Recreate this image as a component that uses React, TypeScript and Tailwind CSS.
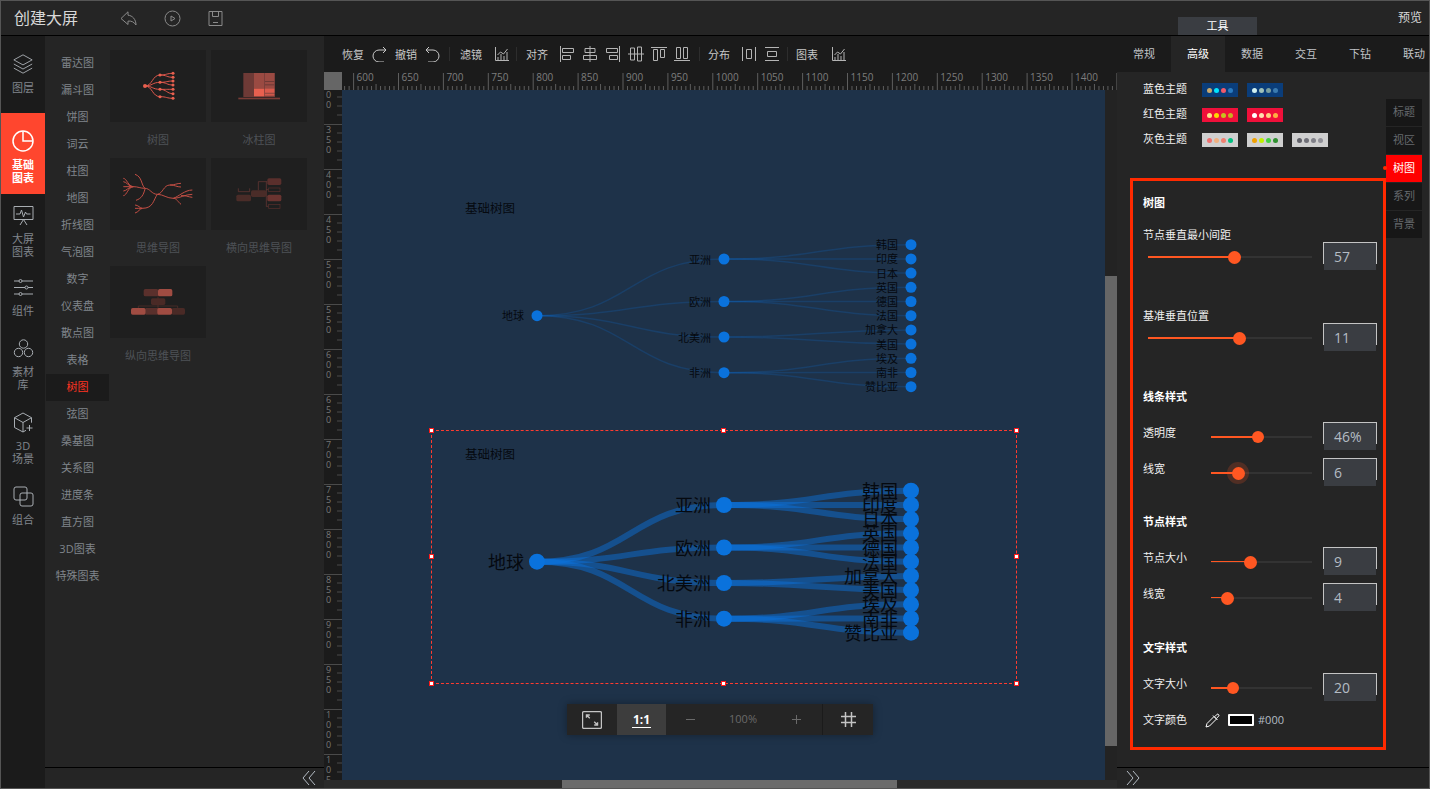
import React from 'react';

const categories = ['雷达图', '漏斗图', '饼图', '词云', '柱图', '地图', '折线图', '气泡图', '数字', '仪表盘', '散点图', '表格', '树图', '弦图', '桑基图', '关系图', '进度条', '直方图', '3D图表', '特殊图表'];
const tabs = ['常规', '高级', '数据', '交互', '下钻', '联动'];
const anchors = ['标题', '视区', '树图', '系列', '背景'];

const themes = [
  { label: '蓝色主题', bg: 'bg-[#0a3d7a]', sets: [['#c8a96e', '#00e5ff', '#f05a6a', '#2a7bc0'], ['#d0f0f0', '#9fc0b8', '#7a9f9f', '#3a7bb0']] },
  { label: '红色主题', bg: 'bg-[#f0103a]', sets: [['#ffe08a', '#ffd800', '#c8c020', '#c8b020'], ['#ffffff', '#ffe0b0', '#ffd080', '#ffb040']] },
  { label: '灰色主题', bg: 'bg-[#cfcfcf]', sets: [['#f07070', '#f0b080', '#f08070', '#00c080'], ['#f0a000', '#c0f000', '#40d040', '#309030'], ['#606068', '#707078', '#808088', '#909098']] },
];

const stroke = { fill: 'none', stroke: 'currentColor', strokeWidth: 1 };

function Icon({ size = 16, box = 16, className = '', children }: { size?: number; box?: number; className?: string; children: React.ReactNode }) {
  return (
    <svg width={size} height={size} viewBox={`0 0 ${box} ${box}`} className={`shrink-0 ${className}`} {...stroke}>
      {children}
    </svg>
  );
}

// toolbar icons
const ChartGlyph = () => (
  <Icon className="text-[#b4b4b4]">
    <path d="M1.5 1v13.5H15M4 14v-3M7 14V8M10 14v-4M13 14V6M3.5 9l3-3 3 2 4-5" />
  </Icon>
);
const AlignGlyph = ({ kind }: { kind: string }) => {
  const shapes: Record<string, React.ReactNode> = {
    left: <path d="M1.5 0v16M3.5 2.5h11v4h-11zM3.5 9.5h8v4h-8z" />,
    centerH: <path d="M8 0v16M3 2.5h10v4H3zM1.5 9.5h13v4h-13z" />,
    right: <path d="M14.5 0v16M1.5 2.5h11v4h-11zM4.5 9.5h8v4h-8z" />,
    centerV: <path d="M0 8h16M2.5 2h4v12h-4zM9.5 1h4v14h-4z" />,
    top: <path d="M0 1.5h16M2.5 3.5h4v11h-4zM9.5 3.5h4v8h-4z" />,
    bottom: <path d="M0 14.5h16M2.5 1.5h4v11h-4zM9.5 1.5h4v11h-4z" />,
    distH: <path d="M1.5 1v14M14.5 1v14M5.5 3.5h5v9h-5z" />,
    distV: <path d="M1 1.5h14M1 14.5h14M3.5 5.5h9v5h-9z" />,
  };
  return <Icon className="text-[#b4b4b4]">{shapes[kind]}</Icon>;
};

function ToolText({ children }: { children: React.ReactNode }) {
  return <span className="text-[11px] text-[#c8c8c8] leading-none whitespace-nowrap">{children}</span>;
}
const Sep = () => <span className="w-px h-[14px] bg-[#2d2d2d] shrink-0" />;

function RailItem({ label, height, pt, active, children }: { label: string[]; height: number; pt: number; active?: boolean; children: React.ReactNode }) {
  return (
    <div
      className={`flex flex-col items-center ${active ? 'bg-[#ff462e] text-white font-bold' : 'text-[#80858c]'}`}
      style={{ height, paddingTop: pt }}
    >
      <span className={active ? 'text-white' : 'text-[#a8adb2]'}>{children}</span>
      <div className="mt-[6px] text-[11px] leading-[13px] text-center">
        {label.map(l => <div key={l}>{l}</div>)}
      </div>
    </div>
  );
}

function Thumb({ caption, box, children }: { caption: string; box: string; children: React.ReactNode }) {
  return (
    <div>
      <svg viewBox={box} className="block w-[96px] h-[72px] bg-[#1f1f1f]">{children}</svg>
      <div className="h-[36px] flex items-center justify-center text-[11px] text-[#4e5257]">{caption}</div>
    </div>
  );
}

// small tree picture on the first thumbnail
function TreeThumb() {
  const mids = [90, 112, 133, 155];
  const leaves = [85, 97, 108, 120, 133, 146, 160];
  const links: string[] = [];
  mids.forEach(y => links.push(`M120 123C142 123 142 ${y} 165 ${y}`));
  leaves.forEach((y, i) => {
    const m = mids[Math.min(3, Math.floor(i / 1.8))];
    links.push(`M165 ${m}C185 ${m} 185 ${y} 204 ${y}`);
  });
  return (
    <>
      {links.map(d => <path key={d} d={d} fill="none" stroke="#e0584d" strokeWidth="3" />)}
      <circle cx="120" cy="123" r="6" fill="#e8604f" />
      {mids.map(y => <circle key={y} cx="165" cy={y} r="4.5" fill="#e8604f" />)}
      {leaves.map(y => <circle key={y} cx="204" cy={y} r="4.5" fill="#e8604f" />)}
    </>
  );
}

function IcicleThumb() {
  return (
    <>
      <rect x="415" y="84" width="95" height="72" fill="#6e3a36" />
      <rect x="447" y="84" width="31" height="47" fill="#9a4a42" />
      <rect x="447" y="131" width="31" height="23" fill="#e8604f" />
      <rect x="480" y="84" width="28" height="70" fill="#9a4a42" />
      <rect x="480" y="108" width="28" height="3" fill="#6e3a36" />
      <rect x="480" y="118" width="28" height="3" fill="#6e3a36" />
      <rect x="480" y="131" width="28" height="12" fill="#d85a4c" />
      <rect x="480" y="148" width="28" height="3" fill="#e8604f" />
      <rect x="400" y="158" width="125" height="5" fill="#7a3c36" />
    </>
  );
}

function MindThumb() {
  const d = [
    'M157 88C140 88 135 70 120 70C105 70 100 65 85 65',
    'M120 70C108 60 112 35 90 28',
    'M120 72C115 90 110 100 93 106',
    'M157 88C145 105 145 130 112 130C100 130 100 130 90 130',
    'M157 88C175 85 175 60 195 60C210 60 215 55 228 55M195 60C210 60 215 66 228 66',
    'M157 88C175 88 185 100 205 100C225 100 240 88 262 88M205 100C215 100 220 112 228 118M205 100C220 95 240 75 262 75M228 92C240 90 250 96 262 97',
    'M85 65C70 65 65 40 55 40M85 65C70 65 65 50 55 50M85 65H55M85 65C70 65 65 78 55 78M85 65C70 65 65 92 55 92',
    'M112 130C105 130 100 120 90 120M112 130C105 130 100 142 90 144',
  ];
  return <>{d.map(p => <path key={p} d={p} fill="none" stroke="#c24e44" strokeWidth="3" />)}</>;
}

function HorizontalThumb() {
  return (
    <>
      <path d="M400 70v10h34V70M484 50v75M460 76V50h27M484 74h6M484 124h6M438 98H420" fill="none" stroke="#6e3a36" strokeWidth="2" />
      <rect x="487" y="40" width="42" height="20" rx="5" fill="#5a2f2c" />
      <rect x="491" y="69" width="34" height="11" fill="none" stroke="#5a2f2c" strokeWidth="2" />
      <rect x="487" y="89" width="42" height="20" rx="5" fill="#6a3430" />
      <rect x="491" y="118" width="34" height="12" fill="none" stroke="#5a2f2c" strokeWidth="2" />
      <rect x="438" y="76" width="46" height="20" rx="5" fill="#4a2c28" />
      <rect x="394" y="89" width="44" height="20" rx="5" fill="#4a2c28" />
    </>
  );
}

function VerticalThumb() {
  return (
    <>
      <path d="M100 429v-6h118v6M159 394v35" fill="none" stroke="#5a302c" strokeWidth="2" />
      <rect x="116" y="372" width="44" height="22" rx="5" fill="#5a302c" />
      <rect x="159" y="372" width="43" height="22" rx="5" fill="#a04c42" />
      <rect x="138" y="400" width="43" height="20" rx="5" fill="#4a2a26" />
      <rect x="122" y="429" width="40" height="20" fill="#5a302c" />
      <rect x="78" y="429" width="44" height="20" rx="5" fill="#a04c42" />
      <rect x="200" y="429" width="40" height="20" rx="5" fill="#4a2a26" />
      <rect x="157" y="429" width="44" height="20" rx="5" fill="#a04c42" />
    </>
  );
}

function TopRuler() {
  const ticks = [];
  for (let i = -3; i < 180; i++) {
    const x = 11.6 + i * 4.49;
    const h = i % 10 === 0 ? 17 : i % 5 === 0 ? 6 : 4;
    ticks.push(<line key={i} x1={x} x2={x} y1={18} y2={18 - h} stroke="#5e5e5e" />);
    if (i % 10 === 0 && i >= 0) {
      ticks.push(<text key={`t${i}`} x={x + 3} y={9} fontSize="10" fill="#7d7d7d">{600 + i * 5}</text>);
    }
  }
  return <svg width="775" height="18" className="block bg-[#1b1b1b]">{ticks}</svg>;
}

function LeftRuler() {
  const items = [];
  for (let i = 0; i < 16; i++) {
    const y = -11 + i * 45;
    items.push(<line key={i} x1={0} x2={18} y1={y + 0.5} y2={y + 0.5} stroke="#4a4a4a" />);
    for (let k = 1; k < 5; k++) {
      items.push(<line key={`m${i}-${k}`} x1={13} x2={18} y1={y + k * 9} y2={y + k * 9} stroke="#4a4a4a" />);
    }
    String(300 + i * 50).split('').forEach((c, n) => {
      items.push(<text key={`d${i}-${n}`} x={2} y={y + 9 + n * 10} fontSize="9" fill="#777777">{c}</text>);
    });
  }
  return <svg width="18" height="690" className="block shrink-0 bg-[#1b1b1b]">{items}</svg>;
}

function curve(x0: number, y0: number, x1: number, y1: number) {
  const m = (x0 + x1) / 2;
  return `M${x0} ${y0}C${m} ${y0} ${m} ${y1} ${x1} ${y1}`;
}

const leafNames = ['韩国', '印度', '日本', '英国', '德国', '法国', '加拿大', '美国', '埃及', '南非', '赞比亚'];
const midNames = ['亚洲', '欧洲', '北美洲', '非洲'];
const midLeaves = [[0, 1, 2], [3, 4, 5], [6, 7], [8, 9, 10]];

function Tree({ top, fontSize, lineWidth, lineOpacity, radius }: { top: number; fontSize: number; lineWidth: number; lineOpacity: number; radius: number }) {
  const rootY = top + 71;
  const midY = [top + 14.3, top + 56.8, top + 92.3, top + 128];
  const leafY = leafNames.map((_, i) => top + i * 14.2);
  const label = 'fill-[#05090f]';
  return (
    <g>
      <text x="465" y={top - 32} fontSize="12.5" className={label}>基础树图</text>
      {midY.map((y, i) => (
        <path key={i} d={curve(537, rootY, 724, y)} fill="none" stroke="#0a74e0" strokeOpacity={lineOpacity} strokeWidth={lineWidth} />
      ))}
      {midLeaves.map((list, i) => list.map(l => (
        <path key={l} d={curve(724, midY[i], 911, leafY[l])} fill="none" stroke="#0a74e0" strokeOpacity={lineOpacity} strokeWidth={lineWidth} />
      )))}
      <circle cx="537" cy={rootY} r={radius} fill="#0a72dc" />
      {midY.map((y, i) => <circle key={i} cx="724" cy={y} r={radius} fill="#0a72dc" />)}
      {leafY.map((y, i) => <circle key={i} cx="911" cy={y} r={radius} fill="#0a72dc" />)}
      <text x="524" y={rootY} fontSize={fontSize} textAnchor="end" dominantBaseline="central" className={label}>地球</text>
      {midNames.map((n, i) => (
        <text key={n} x="711" y={midY[i]} fontSize={fontSize} textAnchor="end" dominantBaseline="central" className={label}>{n}</text>
      ))}
      {leafNames.map((n, i) => (
        <text key={n} x="898" y={leafY[i]} fontSize={fontSize} textAnchor="end" dominantBaseline="central" className={label}>{n}</text>
      ))}
    </g>
  );
}

const handles = [
  'left-[-3px] top-[-3px]', 'left-[289px] top-[-3px]', 'right-[-3px] top-[-3px]',
  'left-[-3px] top-[123px]', 'right-[-3px] top-[123px]',
  'left-[-3px] bottom-[-3px]', 'left-[289px] bottom-[-3px]', 'right-[-3px] bottom-[-3px]',
];

function Slider({ width, at, thumb = 13, thin, halo }: { width: number; at: number; thumb?: number; thin?: boolean; halo?: boolean }) {
  return (
    <div className="relative h-[2px] mt-[2px] bg-[#333333]" style={{ width }}>
      <div className={`absolute left-0 top-0 bg-[#ff5722] ${thin ? 'h-px' : 'h-[2px]'}`} style={{ width: at }} />
      {halo && <div className="absolute top-[-10px] w-[22px] h-[22px] rounded-full bg-[#ff5722]/20" style={{ left: at - 11 }} />}
      <div
        className="absolute rounded-full bg-[#ff5722]"
        style={{ width: thumb, height: thumb, left: at - thumb / 2, top: 1 - thumb / 2 }}
      />
    </div>
  );
}

function NumberBox({ value }: { value: string }) {
  return (
    <div className="w-[54px] h-[28px] shrink-0 ml-[11px]">
      <div className="h-[22px] border-t border-x border-[#c4c4c4] bg-[#3a3d42] pl-[10px] text-[14px] leading-[28px] text-[#b4bcc4]">{value}</div>
      <div className="h-[6px] mx-px bg-[#3a3d42]" />
    </div>
  );
}

function SectionTitle({ children, mt }: { children: React.ReactNode; mt: number }) {
  return <div className="h-[14px] text-[11px] leading-[14px] font-bold text-white" style={{ marginTop: mt }}>{children}</div>;
}

function FieldLabel({ children, mt }: { children: React.ReactNode; mt: number }) {
  return <div className="h-[14px] text-[11px] leading-[14px] text-[#f0f0f0]" style={{ marginTop: mt }}>{children}</div>;
}

function WideRow({ at, value }: { at: number; value: string }) {
  return (
    <div className="flex items-center h-[28px] pl-[5px]">
      <Slider width={164} at={at} />
      <NumberBox value={value} />
    </div>
  );
}

function ShortRow({ label, at, value, mt, thumb, thin, halo }: { label: string; at: number; value: string; mt: number; thumb?: number; thin?: boolean; halo?: boolean }) {
  return (
    <div className="flex items-center h-[28px]" style={{ marginTop: mt }}>
      <span className="w-[68px] mb-[6px] text-[11px] leading-[14px] text-[#f0f0f0]">{label}</span>
      <Slider width={101} at={at} thumb={thumb} thin={thin} halo={halo} />
      <NumberBox value={value} />
    </div>
  );
}

export default function App() {
  return (
    <div className="w-[1430px] h-[789px] overflow-hidden flex flex-col border border-[#555555] bg-[#252525] font-['Open_Sans','Noto_Sans_CJK_SC',sans-serif]">
      {/* top bar */}
      <header className="h-[35px] shrink-0 flex items-center border-b border-black bg-[#252525] relative">
        <span className="ml-[13px] w-[64px] text-[16px] text-[#d8d8d8]">创建大屏</span>
        <div className="flex items-center ml-[42px] gap-[27px] text-[#8a8a8a]">
          <svg width="17" height="15" viewBox="0 0 17 15" {...stroke}><path d="M8 .8L1 7.5l7 6v-3.4c3.5-.4 6.200 1 8 3.900C16 8.500 12.500 4.500 8 4.200z" /></svg>
          <svg width="17" height="17" viewBox="0 0 17 17" {...stroke}><circle cx="8.500" cy="8.500" r="7.500" /><path d="M7 6l4 2.500L7 11z" /></svg>
          <svg width="15" height="15" viewBox="0 0 15 15" {...stroke}><path d="M1 .5h13v14H1zM4.500 .5v5h6v-5M5 11.500h5" /></svg>
        </div>
        <div className="ml-[955px] mt-auto w-[79px] h-[18px] bg-[#3a3d42] flex items-center justify-center text-[11px] text-white">工具</div>
        <span className="ml-auto mr-[7px] text-[12px] text-[#d8d8d8]">预览</span>
      </header>

      <div className="flex flex-1 min-h-0">
        {/* left rail */}
        <nav className="w-[44px] shrink-0 bg-[#1b1b1b]">
          <RailItem label={['图层']} height={77} pt={17}>
            <Icon size={22} box={24}><path d="M12 2l10 5.500L12 13 2 7.500zM2 12l10 5.500L22 12M2 16.500L12 22l10-5.500" /></Icon>
          </RailItem>
          <RailItem label={['基础', '图表']} height={81} pt={17} active>
            <Icon size={22} box={22}><g strokeWidth="1.500"><circle cx="11" cy="11" r="10" /><path d="M11 1v10h10" /></g></Icon>
          </RailItem>
          <RailItem label={['大屏', '图表']} height={71} pt={11}>
            <Icon size={21} box={21}><path d="M1 1.500h19v13H1zM3 9h4l1.500-4 2 7 2-5 1 2h4M7 20l3.500-5.500L14 20" /></Icon>
          </RailItem>
          <RailItem label={['组件']} height={65} pt={12}>
            <Icon size={21} box={21}><path d="M1 4h5M9 4h11M1 10.500h11M15 10.500h5M1 17h5M9 17h11" /><circle cx="7.500" cy="4" r="1.500" /><circle cx="13.500" cy="10.500" r="1.500" /><circle cx="7.500" cy="17" r="1.500" /></Icon>
          </RailItem>
          <RailItem label={['素材', '库']} height={70} pt={8}>
            <Icon size={21} box={21}><circle cx="10.500" cy="6" r="4.200" /><circle cx="5.500" cy="14.500" r="4.200" /><circle cx="15.500" cy="14.500" r="4.200" /></Icon>
          </RailItem>
          <RailItem label={['3D', '场景']} height={75} pt={12}>
            <Icon size={21} box={21}><path d="M10 1l8.500 4.700v5M10 1L1.500 5.700v9.800L10 20l3-1.700M1.500 5.700L10 10.500l8.500-4.800M10 10.500V20M16.500 13v6M13.500 16h6" /></Icon>
          </RailItem>
          <RailItem label={['组合']} height={60} pt={11}>
            <Icon size={21} box={21}><rect x="1" y="1" width="13" height="13" rx="2" /><rect x="7" y="7" width="13" height="13" rx="2" /></Icon>
          </RailItem>
        </nav>

        {/* chart picker */}
        <aside className="w-[279px] shrink-0 flex flex-col bg-[#252525]">
          <div className="flex-1 flex min-h-0">
            <ul className="w-[64px] shrink-0 pt-[14px]">
              {categories.map(c => (
                <li
                  key={c}
                  className={`h-[27px] ml-px flex items-center justify-center text-[11px] ${c === '树图' ? 'bg-[#1b1b1b] text-[#ff3322]' : 'text-[#80858c]'}`}
                >
                  {c}
                </li>
              ))}
            </ul>
            <div className="grid grid-cols-[96px_96px] gap-x-[5px] content-start ml-px pt-[14px]">
              <Thumb caption="树图" box="15 15 288 216"><TreeThumb /></Thumb>
              <Thumb caption="冰柱图" box="318 15 288 216"><IcicleThumb /></Thumb>
              <Thumb caption="思维导图" box="15 -21 288 216"><MindThumb /></Thumb>
              <Thumb caption="横向思维导图" box="318 -21 288 216"><HorizontalThumb /></Thumb>
              <Thumb caption="纵向思维导图" box="15 303 288 216"><VerticalThumb /></Thumb>
            </div>
          </div>
          <div className="h-[21px] shrink-0 border-t border-black flex items-center justify-end pr-[8px] text-[#b4bcc4]">
            <Icon size={14} box={14}><path d="M7 0L1 7l6 7M13 0L7 7l6 7" /></Icon>
          </div>
        </aside>

        {/* canvas column */}
        <main className="w-[793px] shrink-0 flex flex-col min-h-0">
          <div className="h-[36px] shrink-0 flex items-center pl-[18px] bg-[#1b1b1b]">
            <ToolText>恢复</ToolText>
            <Icon className="ml-[8px] text-[#c8c8c8]"><path d="M14 4H7a6 6 0 0 0 0 12h5M11 1l3 3-3 3" /></Icon>
            <span className="w-[7px]" />
            <ToolText>撤销</ToolText>
            <Icon className="ml-[7px] text-[#c8c8c8]"><path d="M2 4h7a6 6 0 0 1 0 12H4M5 1L2 4l3 3" /></Icon>
            <span className="w-[9px]" />
            <Sep />
            <span className="w-[10px]" />
            <ToolText>滤镜</ToolText>
            <span className="w-[12px]" />
            <ChartGlyph />
            <span className="w-[6px]" />
            <Sep />
            <span className="w-[9px]" />
            <ToolText>对齐</ToolText>
            <div className="flex gap-[7px] ml-[11px]">
              {['left', 'centerH', 'right', 'centerV', 'top', 'bottom'].map(k => <AlignGlyph key={k} kind={k} />)}
            </div>
            <span className="w-[9px]" />
            <Sep />
            <span className="w-[8px]" />
            <ToolText>分布</ToolText>
            <div className="flex gap-[7px] ml-[11px]">
              <AlignGlyph kind="distH" />
              <AlignGlyph kind="distV" />
            </div>
            <span className="w-[7px]" />
            <Sep />
            <span className="w-[8px]" />
            <ToolText>图表</ToolText>
            <span className="w-[13px]" />
            <ChartGlyph />
          </div>

          <div className="h-[18px] shrink-0 flex">
            <div className="w-[18px] bg-[#666666]" />
            <TopRuler />
          </div>

          <div className="flex-1 flex min-h-0">
            <LeftRuler />
            <div className="relative w-[763px] h-[690px] shrink-0 bg-[#1e3249] overflow-hidden">
              <svg width="763" height="690" viewBox="342 90 763 690" className="block">
                <Tree top={244.7} fontSize={11} lineWidth={1.5} lineOpacity={0.2} radius={5.5} />
                <Tree top={490.7} fontSize={18} lineWidth={6} lineOpacity={0.46} radius={8} />
              </svg>

              <div className="absolute left-[89px] top-[340px] w-[586px] h-[254px] border border-dashed border-[#ff3b30]">
                {handles.map(h => <span key={h} className={`absolute w-[5px] h-[5px] bg-white border border-[#ff1a1a] ${h}`} />)}
              </div>

              <div className="absolute left-[225px] top-[614px] h-[31px] w-[306px] flex bg-[#252525] text-[#6a6a6a] shadow-[0_0_8px_rgba(0,0,0,0.35)]">
                <div className="w-[50px] flex items-center justify-center text-[#c4c4c4]">
                  <Icon size={20} box={18} className="[stroke-width:1.2]"><rect x=".5" y="1.500" width="17" height="15" rx="1" /><path d="M4 7V4.500h3M14 11v2.500h-3M4 4.500L7 7.500M14 13.500L11 10.500" /></Icon>
                </div>
                <div className="w-[49px] bg-[#3d3d3d] flex items-center justify-center">
                  <span className="text-[12px] font-bold leading-[15px] text-white border-b border-white px-px">1:1</span>
                </div>
                <div className="w-[157px] flex items-center justify-between px-[20px] border-r border-[#1b1b1b]">
                  <span className="w-[9px] h-px bg-[#6a6a6a]" />
                  <span className="text-[11px]">100%</span>
                  <Icon size={11} box={11}><path d="M5.500 1v9M1 5.500h9" /></Icon>
                </div>
                <div className="flex-1 flex items-center justify-center text-[#c4c4c4]">
                  <Icon size={15} box={15} className="[stroke-width:1.5]"><path d="M4.500 0v15M10.500 0v15M0 4.500h15M0 10.500h15" /></Icon>
                </div>
              </div>
            </div>
            <div className="w-[12px] shrink-0 bg-[#232323]">
              <div className="mt-[186px] h-[470px] bg-[#666666]" />
            </div>
          </div>

          <div className="h-[8px] shrink-0 flex bg-[#2a2a2a]">
            <div className="w-[238px]" />
            <div className="w-[335px] bg-[#6b6b6b]" />
          </div>
        </main>

        {/* settings panel */}
        <section className="relative flex-1 min-w-0 flex flex-col bg-[#252525]">
          <div className="h-[36px] shrink-0 flex overflow-hidden bg-[#1b1b1b]">
            {tabs.map(t => (
              <div
                key={t}
                className={`w-[54px] shrink-0 flex items-center justify-center text-[11px] ${t === '高级' ? 'bg-[#252525] text-white' : 'text-[#c0c4c8]'}`}
              >
                {t}
              </div>
            ))}
          </div>

          <div className="flex-1 min-h-0 pt-[11px]">
            {themes.map(th => (
              <div key={th.label} className="flex items-center h-[14px] mb-[11px] pl-[26px]">
                <span className="w-[59px] mb-[1px] text-[11px] text-[#f0f0f0]">{th.label}</span>
                <div className="flex gap-[9px]">
                  {th.sets.map(dots => (
                    <div key={dots.join()} className={`w-[36px] h-[14px] flex items-center justify-center gap-[2px] ${th.bg}`}>
                      {dots.map(c => <span key={c} className="w-[5px] h-[5px] rounded-full" style={{ backgroundColor: c }} />)}
                    </div>
                  ))}
                </div>
              </div>
            ))}

            <div className="ml-[13px] mt-[31px] w-[256px] h-[572px] border-[3px] border-[#ff2a00] pl-[10px]">
              <SectionTitle mt={15}>树图</SectionTitle>
              <FieldLabel mt={18}>节点垂直最小间距</FieldLabel>
              <WideRow at={86} value="57" />
              <FieldLabel mt={39}>基准垂直位置</FieldLabel>
              <WideRow at={91} value="11" />
              <SectionTitle mt={39}>线条样式</SectionTitle>
              <ShortRow label="透明度" at={47} value="46%" mt={18} thumb={12} />
              <ShortRow label="线宽" at={27} value="6" mt={8} halo />
              <SectionTitle mt={29}>节点样式</SectionTitle>
              <ShortRow label="节点大小" at={39} value="9" mt={18} thin />
              <ShortRow label="线宽" at={16} value="4" mt={8} thin />
              <SectionTitle mt={30}>文字样式</SectionTitle>
              <ShortRow label="文字大小" at={22} value="20" mt={18} thumb={12} />
              <div className="flex items-center h-[14px] mt-[12px]">
                <span className="w-[62px] text-[11px] leading-[14px] text-[#f0f0f0]">文字颜色</span>
                <svg width="15" height="15" viewBox="0 0 15 15" className="text-white" {...stroke}>
                  <path d="M9 3.500L2 10.500 1 14l3.500-1L11.500 6zM8 2.500L12.500 7M10 3.500l2-2.200c1-.8 2.600.8 1.800 1.800L11.500 5.200" />
                </svg>
                <span className="ml-[8px] w-[26px] h-[12px] bg-black border-2 border-white rounded-[1px]" />
                <span className="ml-[4px] text-[11px] text-[#b4bcc4]">#000</span>
              </div>
            </div>
          </div>

          <div className="h-[21px] shrink-0 border-t border-black flex items-center pl-[9px] text-[#b4bcc4]">
            <Icon size={14} box={14}><path d="M1 0l6 7-6 7M7 0l6 7-6 7" /></Icon>
          </div>

          <div className="absolute left-[269px] top-[63px] w-[36px] flex flex-col gap-px">
            {anchors.map(a => (
              <div
                key={a}
                className={`relative h-[27px] flex items-center justify-center text-[11px] ${a === '树图' ? 'bg-[#ff0000] text-white' : 'bg-[#171717] text-[#666a6e]'}`}
              >
                {a === '树图' && <span className="absolute left-[-3px] top-[11px] w-[4px] h-[4px] rounded-full bg-[#ff2a00]" />}
                {a}
              </div>
            ))}
          </div>
        </section>
      </div>
    </div>
  );
}
